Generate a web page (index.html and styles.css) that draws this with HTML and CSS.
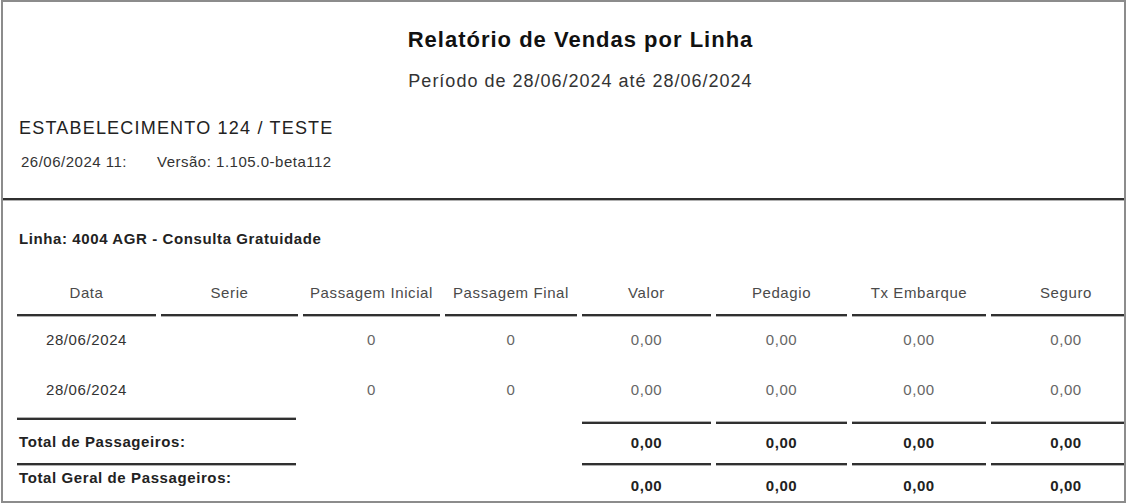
FILE: index.html
```html
<!DOCTYPE html>
<html lang="pt-BR">
<head>
<meta charset="utf-8">
<title>Relatório de Vendas por Linha</title>
<link rel="stylesheet" href="styles.css">
</head>
<body>
<div class="page">
  <header class="report-head">
    <div class="titles">
      <h1 class="title">Relatório de Vendas por Linha</h1>
      <p class="period">Período de 28/06/2024 até 28/06/2024</p>
    </div>
    <p class="company">ESTABELECIMENTO 124 / TESTE</p>
    <p class="meta"><span class="meta-date">26/06/2024 11:</span><span class="meta-version">Versão: 1.105.0-beta112</span></p>
  </header>
  <section class="group">
    <p class="line-name">Linha: 4004 AGR - Consulta Gratuidade</p>
    <div class="grid">
      <div class="th">Data</div>
      <div class="th">Serie</div>
      <div class="th">Passagem Inicial</div>
      <div class="th">Passagem Final</div>
      <div class="th">Valor</div>
      <div class="th">Pedagio</div>
      <div class="th">Tx Embarque</div>
      <div class="th">Seguro</div>

      <div class="td date">28/06/2024</div>
      <div class="td"></div>
      <div class="td num">0</div>
      <div class="td num">0</div>
      <div class="td num">0,00</div>
      <div class="td num">0,00</div>
      <div class="td num">0,00</div>
      <div class="td num">0,00</div>

      <div class="td date">28/06/2024</div>
      <div class="td"></div>
      <div class="td num">0</div>
      <div class="td num">0</div>
      <div class="td num">0,00</div>
      <div class="td num">0,00</div>
      <div class="td num">0,00</div>
      <div class="td num">0,00</div>

      <div class="total-label">Total de Passageiros:</div>
      <div class="total-val first-val">0,00</div>
      <div class="total-val">0,00</div>
      <div class="total-val">0,00</div>
      <div class="total-val">0,00</div>

      <div class="grand-label">Total Geral de Passageiros:</div>
      <div class="grand-val first-val">0,00</div>
      <div class="grand-val">0,00</div>
      <div class="grand-val">0,00</div>
      <div class="grand-val">0,00</div>
    </div>
  </section>
</div>
</body>
</html>
```

FILE: styles.css
```css
* {
  box-sizing: border-box;
}

html, body {
  margin: 0;
  padding: 0;
  background: #ffffff;
}

body {
  font-family: "Liberation Sans", Arial, sans-serif;
  color: #222;
}

.page {
  width: 1125px;
  height: 503px;
  margin-left: 1px;
  border: 2px solid #8c8c8c;
  overflow: hidden;
  background: #fff;
}

p, h1 {
  margin: 0;
}

.report-head {
  padding: 26px 0 27px 16px;
  border-bottom: 2px solid #2f2f2f;
  box-shadow: 0 1px 0 #b0b0b0;
}

.titles {
  padding-left: 18px;
  text-align: center;
}

.title {
  font-size: 22px;
  line-height: 24px;
  font-weight: bold;
  letter-spacing: 1px;
  color: #111;
}

.period {
  margin-top: 18px;
  font-size: 18px;
  line-height: 22px;
  letter-spacing: 1px;
  color: #333;
}

.company {
  margin-top: 25px;
  font-size: 18px;
  line-height: 22px;
  letter-spacing: 1.2px;
  color: #222;
}

.meta {
  margin-top: 14px;
  padding-left: 2px;
  display: flex;
  font-size: 15px;
  line-height: 18px;
  letter-spacing: 0.5px;
  color: #333;
}

.meta-date {
  width: 136px;
}

.group {
  padding: 30px 0 0 16px;
}

.line-name {
  font-size: 15px;
  line-height: 18px;
  font-weight: bold;
  letter-spacing: 0.6px;
  color: #222;
}

.grid {
  margin-top: 36px;
  margin-left: -2px;
  display: grid;
  grid-template-columns: 139px 137px 137px 132px 129px 131px 134px 150px;
  column-gap: 5px;
  align-items: start;
  width: 1124px;
  font-size: 15px;
  line-height: 18px;
  letter-spacing: 0.6px;
}

.th {
  padding-bottom: 12px;
  text-align: center;
  color: #4a4a4a;
  border-bottom: 2px solid #303030;
  box-shadow: 0 1px 0 #b0b0b0;
  white-space: nowrap;
}

.td {
  padding: 15px 0 17px;
  height: 50px;
  text-align: center;
}

.td.date {
  color: #333;
}

.td.num {
  color: #666;
}

.total-label {
  grid-column: 1 / span 2;
  margin: 2px 2px 0 0;
  padding: 13px 0 12px 2px;
  border-top: 2px solid #303030;
  border-bottom: 2px solid #303030;
  box-shadow: 0 1px 0 #b0b0b0, 0 -1px 0 #b0b0b0;
  font-weight: bold;
  color: #222;
  white-space: nowrap;
}

.total-val {
  margin-top: 6px;
  padding: 10px 0 11px;
  border-top: 2px solid #303030;
  border-bottom: 2px solid #303030;
  box-shadow: 0 1px 0 #b0b0b0, 0 -1px 0 #b0b0b0;
  text-align: center;
  font-weight: bold;
  color: #222;
}

.first-val {
  grid-column-start: 5;
}

.grand-label {
  grid-column: 1 / span 2;
  padding: 4px 0 0 2px;
  font-weight: bold;
  color: #222;
  white-space: nowrap;
}

.grand-val {
  padding-top: 12px;
  text-align: center;
  font-weight: bold;
  color: #222;
}
```
